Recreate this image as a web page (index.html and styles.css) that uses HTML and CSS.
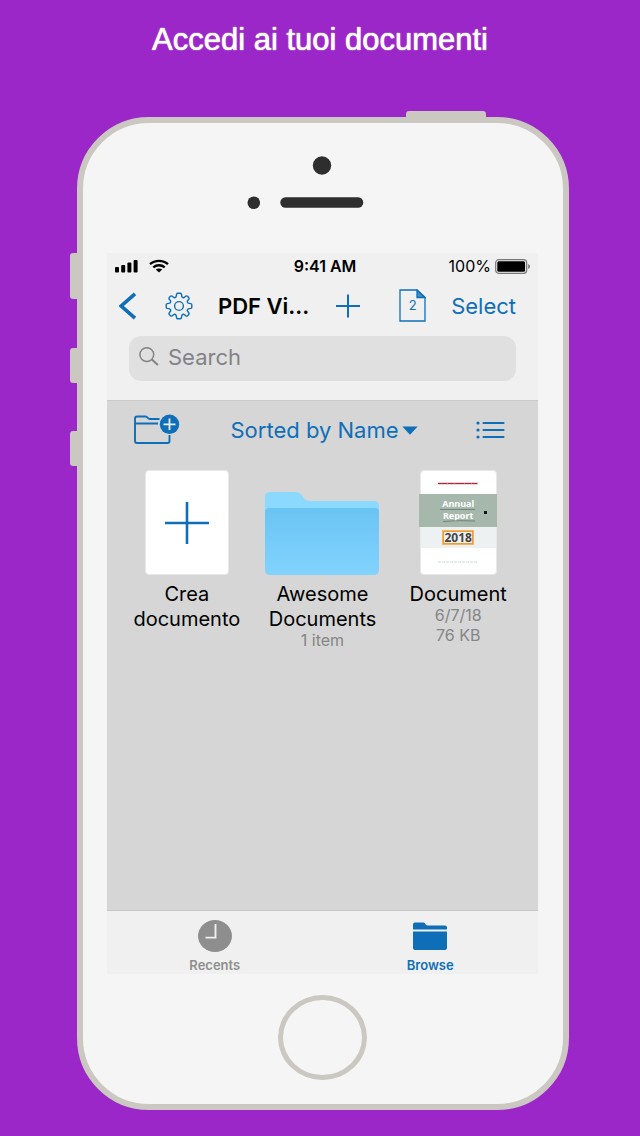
FILE: index.html
```html
<!DOCTYPE html>
<html lang="it">
<head>
<meta charset="utf-8">
<meta name="viewport" content="width=device-width, initial-scale=1">
<title>Accedi ai tuoi documenti</title>
<link rel="stylesheet" href="styles.css">
</head>
<body>
<h1 class="headline">Accedi ai tuoi documenti</h1>
<main class="stage">
  <div class="phone">
    <span class="key key-power"></span>
    <span class="key key-mute"></span>
    <span class="key key-up"></span>
    <span class="key key-down"></span>
    <div class="forehead">
      <svg width="120" height="60" viewBox="0 0 120 60" aria-hidden="true" fill="#2e2e2e">
        <circle cx="78" cy="14.500" r="9.200"/>
        <circle cx="9.800" cy="51.800" r="6.300"/>
        <rect x="36.300" y="46.300" width="83" height="10.400" rx="5.200"/>
      </svg>
    </div>
    <div class="screen">
      <div class="status">
        <div class="status-side">
          <svg width="23" height="14" viewBox="0 0 23 14" aria-hidden="true">
            <rect x="0" y="8" width="4" height="5.500" rx="1"/><rect x="6.200" y="6" width="4" height="7.500" rx="1"/><rect x="12.400" y="3.500" width="4" height="10" rx="1"/><rect x="18.600" y="1" width="4" height="12.500" rx="1"/>
          </svg>
          <svg width="20" height="14" viewBox="0 0 20 14" aria-hidden="true" fill="none" stroke="#000" stroke-width="2.300">
            <path d="M1 5.200C6 .7 14 .7 19 5.200M4.300 8.400c3.300-2.900 8.100-2.900 11.400 0"/><path d="M6.800 10.600c2-1.500 4.400-1.500 6.400 0L10 13.500z" fill="#000" stroke="none"/>
          </svg>
        </div>
        <span class="clock">9:41 AM</span>
        <div class="status-side status-end">
          <span>100%</span>
          <svg width="36" height="15" viewBox="0 0 36 15" aria-hidden="true">
            <rect x=".7" y=".7" width="31" height="13.600" rx="3" fill="none" stroke="#777" stroke-width="1.200"/><rect x="2.300" y="2.300" width="27.800" height="10.400" rx="1.500"/><path d="M33.200 5c2.300.8 2.300 4.200 0 5z" fill="#777"/>
          </svg>
        </div>
      </div>
      <nav class="toolbar">
        <div class="tools">
          <button aria-label="Back"><svg width="18" height="28" viewBox="0 0 18 28" fill="none" stroke="currentColor" stroke-width="3.600"><path d="M16 1.800L2.200 14 16 26.200"/></svg></button>
          <button aria-label="Settings"><svg width="28" height="28" viewBox="-14 -14 28 28" fill="none" stroke="currentColor" stroke-width="1.400" stroke-linejoin="round"><circle r="4.400"/><path d="M-2.900-9.200L-2.400-11.800Q-2.100-12.800-1.200-12.800H1.200Q2.100-12.800 2.400-11.800L2.900-9.200Q3.700-8.200 4.800-8.300L7-9.900Q7.900-10.400 8.600-9.700L9.700-8.600Q10.400-7.900 9.900-7L8.300-4.800Q8.200-3.700 9.200-2.900L11.800-2.400Q12.800-2.100 12.800-1.200V1.200Q12.800 2.100 11.800 2.400L9.200 2.900Q8.200 3.700 8.300 4.800L9.900 7Q10.400 7.900 9.700 8.600L8.600 9.700Q7.900 10.400 7 9.900L4.800 8.300Q3.700 8.200 2.900 9.200L2.400 11.800Q2.100 12.800 1.200 12.800H-1.200Q-2.100 12.800-2.400 11.800L-2.900 9.200Q-3.700 8.200-4.800 8.300L-7 9.900Q-7.900 10.400-8.600 9.700L-9.700 8.600Q-10.400 7.900-9.900 7L-8.300 4.800Q-8.200 3.700-9.200 2.900L-11.800 2.400Q-12.800 2.100-12.800 1.200V-1.200Q-12.800-2.100-11.800-2.400L-9.200-2.900Q-8.200-3.700-8.300-4.800L-9.900-7Q-10.400-7.900-9.700-8.600L-8.600-9.700Q-7.900-10.400-7-9.900L-4.800-8.300Q-3.700-8.200-2.900-9.200Z"/></svg></button>
        </div>
        <h2 class="title">PDF Vi...</h2>
        <div class="tools tools-end">
          <button class="add" aria-label="Add"><svg width="24" height="24" viewBox="0 0 24 24" fill="none" stroke="currentColor" stroke-width="2"><path d="M0 12h24M12 .5v23"/></svg></button>
          <button class="pages" aria-label="Open documents: 2"><svg width="27" height="33" viewBox="0 0 27 33" fill="none" stroke="currentColor" stroke-width="1.300"><path d="M1 1h17l8 7.500V32H1z"/><path d="M18 1v7.500h8z" fill="currentColor" fill-opacity=".75"/></svg><span class="pages-count">2</span></button>
          <button class="select">Select</button>
        </div>
      </nav>
      <label class="search">
        <svg width="20" height="20" viewBox="0 0 20 20" fill="none" stroke="currentColor" aria-hidden="true"><circle cx="7.800" cy="7.600" r="6.900" stroke-width="1.500"/><path d="M12.900 12.400l6 5.500" stroke-width="2"/></svg>
        <input type="search" placeholder="Search" aria-label="Search">
      </label>
      <section class="browser">
        <div class="sortbar">
          <button aria-label="New folder"><svg width="46" height="32" viewBox="0 0 46 32" fill="none" stroke="currentColor" stroke-width="1.900"><path d="M25.500 5H15.500C14 5 13.500 2.500 11.500 2.500H3Q1 2.500 1 4.500V27Q1 29 3 29H33.500Q35.500 29 35.500 27V21M1 9.500H24" stroke-linejoin="round"/><circle cx="35.500" cy="10.300" r="9.700" fill="currentColor" stroke="none"/><path d="M29.500 10.300h12M35.500 4.500v11.600" stroke="#e8f0f5" stroke-width="1.800"/></svg></button>
          <button class="sort">Sorted by Name<svg width="16" height="9" viewBox="0 0 16 9" aria-hidden="true"><path d="M.3.500h15.400L8 8.800z" fill="currentColor"/></svg></button>
          <button aria-label="List view"><svg width="29" height="18" viewBox="0 0 29 18" fill="none" stroke="currentColor" stroke-width="2.200" stroke-linecap="round"><path d="M7.500 2h20M7.500 9h20M7.500 16h20"/><path d="M2 2h.01M2 9h.01M2 16h.01" stroke-width="3.200"/></svg></button>
        </div>
        <ul class="files">
          <li class="file">
            <a href="#crea"><span class="thumb"><span class="sheet blank"><svg width="44" height="42" viewBox="0 0 44 42" fill="none" stroke="currentColor" stroke-width="2.600"><path d="M0 21h44M22 0v42"/></svg></span></span>
            <span class="name">Crea documento</span></a>
          </li>
          <li class="file">
            <a href="#awesome"><span class="thumb"><svg width="114" height="84" viewBox="0 0 114 84" aria-hidden="true"><defs><linearGradient id="sky" x1="0" y1="0" x2="0" y2="1"><stop offset="0" stop-color="#6ac4f3"/><stop offset="1" stop-color="#82d3fe"/></linearGradient></defs><path d="M0 6Q0 1 5 1H30C39 1 36 10 46 10H109Q114 10 114 15V40H0z" fill="#8bd9fe"/><path d="M0 21Q0 17 4 17H110Q114 17 114 21V79Q114 84 109 84H5Q0 84 0 79z" fill="url(#sky)"/></svg></span>
            <span class="name">Awesome Documents</span>
            <span class="meta">1 item</span></a>
          </li>
          <li class="file">
            <a href="#document"><span class="thumb"><span class="sheet report">
              <svg class="report-rule" width="40" height="3" viewBox="0 0 40 3" aria-hidden="true" fill="none"><path d="M0 1.500h40" stroke="#e6a3ab" stroke-width="2"/><path d="M0 1.500h39" stroke="#a8283c" stroke-dasharray="9 .5 7 .5"/></svg>
              <span class="report-band"><span>Annual</span><span>Report</span><svg class="report-marks" width="78" height="33" viewBox="0 0 78 33" aria-hidden="true" fill="none" stroke="#71857b"><path d="M21 15.500h35M24 27.500q17-1.500 32-.500"/><path d="M65 17h3v3h-3z" fill="#111" stroke="none"/></svg></span>
              <span class="report-year"><b>2018</b></span>
              <svg class="report-foot" width="40" height="2" viewBox="0 0 40 2" aria-hidden="true"><path d="M0 1h40" stroke="#c6d9d2" stroke-dasharray="3 1"/></svg>
            </span></span>
            <span class="name">Document</span>
            <span class="meta">6/7/18</span>
            <span class="meta">76 KB</span></a>
          </li>
        </ul>
      </section>
      <nav class="tabs">
        <a class="tab" href="#recents"><svg width="34" height="34" viewBox="0 0 34 34" aria-hidden="true"><ellipse cx="17" cy="17" rx="17" ry="16" fill="currentColor"/><path d="M17.500 5v13.600H7.500" fill="none" stroke="#f0f0f0" stroke-width="1.900"/></svg>Recents</a>
        <a class="tab active" href="#browse"><svg width="36" height="34" viewBox="0 0 36 34" aria-hidden="true" fill="currentColor"><path d="M1 10.500V5.500Q1 3.500 3 3.500H11.500C13.500 3.500 13 6.500 15.500 6.500H33Q35 6.500 35 8.500v2zM1 12.500h34v16.500Q35 31 33 31H3Q1 31 1 29z"/></svg>Browse</a>
      </nav>
    </div>
    <button class="home" aria-label="Home"></button>
  </div>
</main>
</body>
</html>
```
FILE: styles.css
```css
* { box-sizing: border-box; }

body {
  margin: 0;
  min-height: 100vh;
  background: #9c27c8;
  font-family: Inter, "Liberation Sans", sans-serif;
  color: #000;
}

button {
  display: flex;
  align-items: center;
  padding: 0;
  border: 0;
  background: none;
  color: inherit;
  font: inherit;
}

a { color: inherit; text-decoration: none; }
svg { display: block; flex: none; }

.headline {
  margin: 0;
  padding: 20px 0 57px;
  font: 400 31px/40px "Liberation Sans", Arial, sans-serif;
  color: #fff;
  text-align: center;
  text-shadow: 0 0 1px #fff, 0 0 1px #fff;
}

.stage { padding: 0 71px 26px 77px; }

.phone {
  position: relative;
  padding: 0 25px 24px 24px;
  border: 6px solid #cbc7c1;
  border-radius: 72px;
  background: #f5f5f5;
}

.key { position: absolute; background: #cbc7c1; }
.key-power { top: -12px; right: 77px; width: 80px; height: 8px; border-radius: 3px 3px 0 0; }
.key-mute, .key-up, .key-down { left: -13px; width: 8px; height: 35px; border-radius: 3px 0 0 3px; }
.key-mute { top: 130px; height: 46px; }
.key-up { top: 225px; }
.key-down { top: 308px; }

.forehead {
  display: flex;
  justify-content: center;
  height: 130px;
  padding: 28px 38px 0 0;
}

.screen { background: #f0f0f0; }

.status {
  display: grid;
  grid-template-columns: 1fr auto 1fr;
  align-items: center;
  height: 26px;
  padding: 0 7px 0 8px;
  font-size: 16px;
}
.status-side { display: flex; align-items: center; gap: 11px; }
.status-end { justify-content: flex-end; gap: 4px; }
.clock { font-weight: 600; padding-left: 4px; }

.toolbar {
  display: flex;
  align-items: center;
  height: 53px;
  padding: 0 22px 0 12px;
  color: #0e6fb8;
  font-size: 22px;
}
.tools { display: flex; align-items: center; gap: 28px; }
.tools-end { gap: 25px; }
.add { margin-right: 14px; }
.title {
  flex: 1;
  margin: 0;
  padding-left: 25px;
  color: #000;
  font-size: 22px;
  font-weight: 600;
  white-space: nowrap;
}
.pages { position: relative; }
.pages-count { position: absolute; inset: 0; line-height: 33px; font-size: 13px; text-align: center; }

.search {
  display: flex;
  align-items: center;
  gap: 9px;
  height: 45px;
  margin: 4px 22px 19px;
  padding: 0 10px 3px;
  border-radius: 12px;
  background: #e0e0e0;
  color: #838387;
}
.search input {
  flex: 1;
  min-width: 0;
  padding: 0;
  border: 0;
  outline: 0;
  background: none;
  font: 22px Inter, "Liberation Sans", sans-serif;
}
.search input::placeholder { color: #838387; opacity: 1; }

.browser {
  min-height: 511px;
  border-top: 1px solid #cacaca;
  border-bottom: 1px solid #c6c6c6;
  background: #d6d6d6;
}
.sortbar {
  display: grid;
  grid-template-columns: 1fr auto 1fr;
  align-items: center;
  height: 58px;
  padding: 0 33px 0 27px;
  color: #0e6fb8;
  font-size: 22px;
}
.sortbar > :last-child { justify-self: end; }
.sort { gap: 3px; padding-left: 9px; }

.files {
  display: grid;
  grid-template-columns: repeat(3, 1fr);
  margin: 0;
  padding: 11px 12px;
  list-style: none;
  text-align: center;
}
.thumb {
  display: flex;
  align-items: flex-end;
  justify-content: center;
  height: 105px;
  margin-bottom: 7px;
}
.name, .meta { display: block; }
.name { margin-bottom: -2px; padding: 0 12px; font-size: 20px; line-height: 25px; }
.meta { color: #858585; font-size: 16px; line-height: 20px; }

.sheet {
  display: flex;
  flex-direction: column;
  align-items: center;
  height: 105px;
  border: 1px solid #e8e8e8;
  border-radius: 4px;
  background: #fff;
}
.blank { width: 84px; justify-content: center; color: #0e6fb8; }
.report { width: 77px; }
.report-rule { margin: 11px 0 9px; }
.report-band {
  position: relative;
  display: flex;
  flex-direction: column;
  align-items: center;
  justify-content: center;
  width: 78px;
  height: 33px;
  padding-bottom: 2px;
  background: #a6b7ac;
  color: #fff;
  font: 700 9px/12px "Noto Sans", sans-serif;
}
.report-marks { position: absolute; inset: 0; }
.report-year {
  display: flex;
  align-items: center;
  justify-content: center;
  align-self: stretch;
  height: 21px;
  background: #edf1f2;
}
.report-year b {
  border: 1px solid #f29a2e;
  outline: 1px solid #f5b461;
  color: #444;
  font: 700 12px/11px "Noto Sans", sans-serif;
}
.report-foot { margin-top: 13px; }

.tabs { display: grid; grid-template-columns: 1fr 1fr; }
.tab {
  display: flex;
  flex-direction: column;
  align-items: center;
  gap: 3px;
  height: 63px;
  padding-top: 8px;
  color: #8e8e8e;
  font-size: 13px;
  font-weight: 600;
  line-height: 18px;
}
.active { color: #0e6fb8; }

.home {
  width: 89px;
  height: 85px;
  margin: 21px auto 0;
  border: 5px solid #cbc7c1;
  border-radius: 50%;
}
```
